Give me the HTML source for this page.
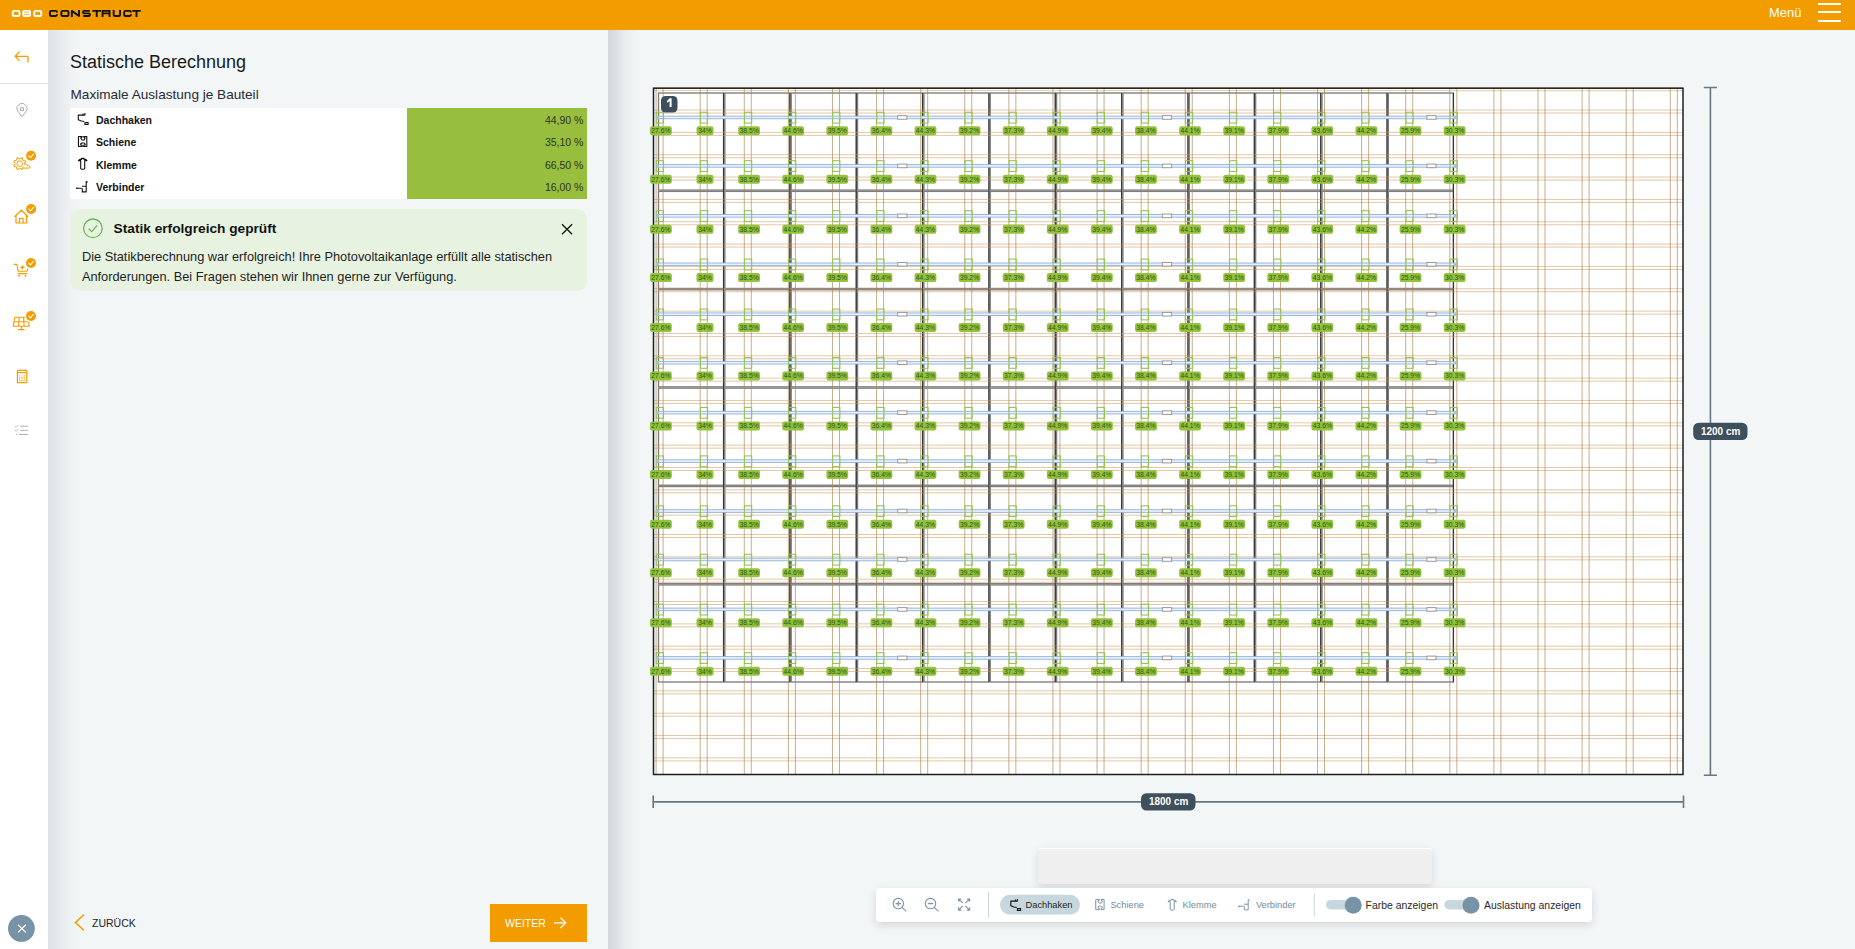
<!DOCTYPE html>
<html><head><meta charset="utf-8">
<style>
*{box-sizing:border-box;margin:0;padding:0}
html,body{width:1855px;height:949px;overflow:hidden;background:#f2f6f7;font-family:"Liberation Sans",sans-serif;color:#222}
.abs{position:absolute}
#hdr{left:0;top:0;width:1855px;height:30px;background:#f39c00}
#side{left:0;top:30px;width:48px;height:919px;background:#fff}
#panel{left:48px;top:30px;width:560px;height:919px;background:#f2f6f7}
#shadowL{left:48px;top:30px;width:32px;height:919px;background:linear-gradient(90deg,#dde1e3 0%,#e7eaec 30%,#eef1f2 65%,rgba(242,246,247,0) 100%)}
#shadowR{left:608px;top:30px;width:32px;height:919px;background:linear-gradient(90deg,#d2d7d9 0%,#dde1e3 28%,#e8ebed 50%,#eef1f2 70%,rgba(242,246,247,0) 100%)}
.t{position:absolute;white-space:nowrap;line-height:1}
#tbl{left:70px;top:108px;width:517px;height:90.6px;background:#fff}
#green{left:407px;top:108px;width:180px;height:90.6px;background:#97bf3d}
.row{position:absolute;left:0;height:22.65px;width:517px}
.row .n{position:absolute;left:26px;top:6px;font-weight:bold;font-size:10.5px;color:#111}
.row .p{position:absolute;right:3.6px;top:6px;font-size:10.5px;color:#2c3322}
.row svg{position:absolute}
#alert{left:70px;top:209.2px;width:517px;height:81.5px;background:#e7f2e1;border-radius:10px}
.lb rect{fill:#92c23e}
.lb text{font-size:6.8px;fill:#30540f;text-anchor:middle;font-family:"Liberation Sans",sans-serif}
#tb{left:876px;top:888.2px;width:716px;height:33.8px;background:#fff;border-radius:4px;box-shadow:0 3px 10px rgba(0,0,0,0.13)}
#gbar{left:1037.5px;top:848.2px;width:394.5px;height:35.5px;background:#efefef;border-radius:3px;box-shadow:0 3px 8px rgba(0,0,0,0.12);border-top:1px solid #fff}
.tbt{position:absolute;font-size:9.3px;color:#6f8c9c;top:13.1px;white-space:nowrap;line-height:1}
</style></head><body>
<div id="hdr" class="abs">
<svg class="abs" style="left:0;top:0" width="160" height="30"><path d="M12.75 12.15Q12.75 10.85 14.05 10.85L18.20 10.85Q19.50 10.85 19.50 12.15L19.50 14.65Q19.50 15.95 18.20 15.95L14.05 15.95Q12.75 15.95 12.75 14.65ZM23.25 11.85Q23.25 10.85 24.25 10.85L29.05 10.85Q30.05 10.85 30.05 11.85L30.05 14.95Q30.05 15.95 29.05 15.95L24.25 15.95Q23.25 15.95 23.25 14.95ZM23.25 13.40H30.05M34.25 12.15Q34.25 10.85 35.55 10.85L39.95 10.85Q41.25 10.85 41.25 12.15L41.25 14.65Q41.25 15.95 39.95 15.95L35.55 15.95Q34.25 15.95 34.25 14.65Z" stroke="#fff" stroke-width="1.9" fill="none" stroke-linejoin="round"/><path d="M56.95 12.50L56.95 11.68Q56.95 10.85 55.65 10.85L51.25 10.85Q49.95 10.85 49.95 12.15L49.95 14.65Q49.95 15.95 51.25 15.95L55.65 15.95Q56.95 15.95 56.95 15.12L56.95 14.30M61.35 12.15Q61.35 10.85 62.65 10.85L67.25 10.85Q68.55 10.85 68.55 12.15L68.55 14.65Q68.55 15.95 67.25 15.95L62.65 15.95Q61.35 15.95 61.35 14.65ZM71.85 16.90V10.85L79.05 15.95V9.90M89.85 10.85L84.15 10.85Q83.15 10.85 83.15 11.85L83.15 12.40Q83.15 13.40 84.15 13.40L88.85 13.40Q89.85 13.40 89.85 14.40L89.85 14.95Q89.85 15.95 88.85 15.95L83.15 15.95M92.40 10.85H101.10M96.75 10.85V16.90M102.55 16.90V10.85H109.55V13.40H102.55M109.55 13.40V16.90M113.65 9.90L113.65 14.65Q113.65 15.95 114.95 15.95L118.75 15.95Q120.05 15.95 120.05 14.65L120.05 9.90M130.85 12.50L130.85 11.68Q130.85 10.85 129.55 10.85L125.45 10.85Q124.15 10.85 124.15 12.15L124.15 14.65Q124.15 15.95 125.45 15.95L129.55 15.95Q130.85 15.95 130.85 15.12L130.85 14.30M132.30 10.85H140.70M136.50 10.85V16.90" stroke="#111" stroke-width="1.9" fill="none" stroke-linejoin="round"/></svg>
  <div class="t" style="left:1769px;top:5.7px;font-size:13px;color:#fff">Menü</div>
  <div class="abs" style="left:1818px;top:3px;width:23px;height:2px;background:#fff"></div>
  <div class="abs" style="left:1818px;top:11px;width:23px;height:2px;background:#fff"></div>
  <div class="abs" style="left:1818px;top:20px;width:23px;height:2px;background:#fff"></div>
</div>
<div id="side" class="abs">
<svg class="abs" style="left:0;top:-30px" width="48" height="949">
<path d="M19.3 51.9L15.2 56.3L19.3 60.6M15.2 56.3H27.2Q28 56.3 28 57.1V62" stroke="#f39c00" stroke-width="1.3" fill="none" stroke-linecap="round"/>
<path d="M0 83.5H48" stroke="#e3e3e3" stroke-width="1"/>
<path d="M22 116.8L18.2 111.6A4.9 4.9 0 1 1 25.8 111.6Z" stroke="#a9a9a9" stroke-width="1" fill="none" stroke-linejoin="round"/><rect x="20.5" y="107.8" width="3" height="2.6" stroke="#a9a9a9" stroke-width="0.9" fill="none"/>
<polygon points="22.23,157.50 22.95,160.35 25.80,161.07 24.30,163.60 25.80,166.13 22.95,166.85 22.23,169.70 19.70,168.20 17.17,169.70 16.45,166.85 13.60,166.13 15.10,163.60 13.60,161.07 16.45,160.35 17.17,157.50 19.70,159.00" stroke="#f39c00" stroke-width="1" fill="#fff" stroke-linejoin="round"/><circle cx="19.7" cy="163.6" r="2.8" stroke="#f39c00" stroke-width="1" fill="none"/>
<path d="M23.3 168.1H29.1Q30.1 168 29.9 166.9Q29.7 165.6 28.3 165.6H27.2Q26.9 164 25.3 163.9Q24.2 163.9 23.7 164.6" stroke="#f39c00" stroke-width="1" fill="#fff" stroke-linejoin="round"/>
<circle cx="31.1" cy="155.8" r="6.3" fill="#fff"/><circle cx="31.1" cy="155.8" r="5" fill="#f39c00"/><path d="M28.8 155.9L30.5 157.60000000000002L33.5 154.20000000000002" stroke="#fff" stroke-width="1.1" fill="none" stroke-linecap="round" stroke-linejoin="round"/>
<path d="M14.5 216.8L21.3 210.2L28.1 216.8M16 215.5V223H26.6V215.5M19.5 223V218.3H23.1V223" stroke="#f39c00" stroke-width="1.2" fill="none" stroke-linejoin="round"/>
<circle cx="31.1" cy="209" r="6.3" fill="#fff"/><circle cx="31.1" cy="209" r="5" fill="#f39c00"/><path d="M28.8 209.1L30.5 210.8L33.5 207.4" stroke="#fff" stroke-width="1.1" fill="none" stroke-linecap="round" stroke-linejoin="round"/>
<path d="M14.2 264.4H16.3Q16.9 264.4 17 265L18 271.2H26.5Q27.6 271.2 27.6 270V267.8M18.3 273.6H27" stroke="#f39c00" stroke-width="1.1" fill="none" stroke-linejoin="round" stroke-linecap="round"/><circle cx="19.1" cy="275.8" r="0.95" fill="#f39c00"/><circle cx="25.5" cy="275.8" r="0.95" fill="#f39c00"/><path d="M22.4 265.3V269.5M20.3 267.4H24.5" stroke="#f39c00" stroke-width="1.1"/>
<circle cx="31" cy="263" r="6.3" fill="#fff"/><circle cx="31" cy="263" r="5" fill="#f39c00"/><path d="M28.7 263.1L30.4 264.8L33.4 261.4" stroke="#fff" stroke-width="1.1" fill="none" stroke-linecap="round" stroke-linejoin="round"/>
<path d="M14.7 317.3H27.8L29.2 326.2H13.3Z M14 321.8H28.5 M19.2 317.3L18.6 326.2 M23.6 317.3L24.1 326.2 M21.3 326.2V329.4 M18.2 329.6H24.4" stroke="#f39c00" stroke-width="1.1" fill="none" stroke-linejoin="round"/>
<circle cx="31" cy="316" r="6.3" fill="#fff"/><circle cx="31" cy="316" r="5" fill="#f39c00"/><path d="M28.7 316.1L30.4 317.8L33.4 314.4" stroke="#fff" stroke-width="1.1" fill="none" stroke-linecap="round" stroke-linejoin="round"/>
<rect x="17.4" y="370.3" width="9.4" height="12.4" rx="0.8" stroke="#f39c00" stroke-width="1.2" fill="none"/><path d="M17.6 372.6H26.6" stroke="#f39c00" stroke-width="1.2"/><path d="M19.4 375.3V381M21.9 375.3V381M24.6 375.3V381M19.4 378H24.6M19.4 380.5H24.6" stroke="#f39c00" stroke-width="0.8" stroke-dasharray="1.1 0.9"/>
<path d="M20 426.2H28.2M20 430.3H28.2M19.2 434.5H28.2" stroke="#a9a9a9" stroke-width="0.9"/><path d="M15.2 426L16.3 427.2L18.2 425.2M15.2 430.1L16.3 431.3L18.2 429.3" stroke="#a9a9a9" stroke-width="0.8" fill="none"/><circle cx="16.5" cy="434.6" r="0.6" fill="#a9a9a9"/>
<circle cx="21.4" cy="928.4" r="13.4" fill="#7793a5"/><path d="M18 924.8L25.8 932.4M25.8 924.8L18 932.4" stroke="#fff" stroke-width="1.2"/>
</svg>
</div>
<div id="panel" class="abs"></div>
<div id="shadowL" class="abs"></div>
<div id="shadowR" class="abs"></div>
<div class="t" style="left:70px;top:52.7px;font-size:18px;color:#1a1a1a">Statische Berechnung</div>
<div class="t" style="left:70.5px;top:88px;font-size:13.6px;color:#2a2a35">Maximale Auslastung je Bauteil</div>
<div id="tbl" class="abs"></div>
<div id="green" class="abs"></div>
<div class="abs" style="left:70px;top:108px;width:517px;height:90.6px">
<div class="row" style="top:0.00px"><svg style="left:7.9px;top:5.2px;overflow:visible" width="14" height="13"><path d="M6.9 0V2.1H0.3V6.8L3.4 8L6.3 8.5M6.9 9.5H10.1V11.4H6.9ZM5 0.4V2.1" stroke="#111" stroke-width="1.1" fill="none" stroke-linejoin="round"/></svg><div class="n">Dachhaken</div><div class="p">44,90 %</div></div>
<div class="row" style="top:22.33px"><svg style="left:7.9px;top:6.0px;overflow:visible" width="14" height="13"><path d="M4.2 0.45H0.45V10.55H4.2V9.3L2.7 8.9V7.8L4 7H6.1L7.1 8.2V8.9L5.7 9.3V10.55H8.8V0.45H5.7V1.1L7.1 1.9L6.1 4H4L2.6 1.9L4.2 1.1Z" stroke="#111" stroke-width="1.1" fill="none" stroke-linejoin="round"/></svg><div class="n">Schiene</div><div class="p">35,10 %</div></div>
<div class="row" style="top:44.66px"><svg style="left:8.3px;top:5.3px;overflow:visible" width="14" height="13"><path d="M0.4 2.6L1.8 1.4H3.6V0.4H6V1.4H7.7L9 2.6H6.7V10.4L6 11.2H3.4L2.7 10.4V2.6Z" stroke="#111" stroke-width="1.1" fill="none" stroke-linejoin="round"/></svg><div class="n">Klemme</div><div class="p">66,50 %</div></div>
<div class="row" style="top:66.99px"><svg style="left:6.1px;top:6.2px;overflow:visible" width="14" height="13"><path d="M0.4 7.2H5.7M6.3 7.2V10.9H10.2V7.4M6 5.2H10.2M10.2 7.4V0.6L11.6 1.3" stroke="#111" stroke-width="1.1" fill="none" stroke-linejoin="round"/><circle cx="0.9" cy="7.2" r="0.8" fill="#111"/></svg><div class="n">Verbinder</div><div class="p">16,00 %</div></div>
</div>
<div id="alert" class="abs">
<svg class="abs" style="left:0;top:0" width="517" height="82"><circle cx="22.9" cy="19.3" r="9.3" stroke="#69b755" stroke-width="1.3" fill="none"/><path d="M18.6 19.6L21.7 22.6L27.2 16.4" stroke="#69b755" stroke-width="1.3" fill="none"/><path d="M492 15.3L502.1 25.2M502.1 15.3L492 25.2" stroke="#111" stroke-width="1.3"/></svg><div class="t" style="left:43.6px;top:12.8px;font-size:13.7px;font-weight:bold;color:#111">Statik erfolgreich geprüft</div><div class="t" style="left:11.9px;top:41.85px;font-size:12.8px;color:#1e1e1e">Die Statikberechnung war erfolgreich! Ihre Photovoltaikanlage erfüllt alle statischen</div><div class="t" style="left:11.9px;top:61.85px;font-size:12.8px;color:#1e1e1e">Anforderungen. Bei Fragen stehen wir Ihnen gerne zur Verfügung.</div>
</div>
<div class="abs" style="left:73.5px;top:914px">
<svg width="12" height="18"><path d="M9.5 1L1.5 8.5L9.5 16" stroke="#f39c00" stroke-width="1.6" fill="none" stroke-linecap="round"/></svg>
</div>
<div class="t" style="left:92px;top:918px;font-size:10.5px;color:#222">ZURÜCK</div>
<div class="abs" style="left:490px;top:904px;width:97px;height:38px;background:#f39c00"></div>
<div class="t" style="left:505px;top:917.9px;font-size:10.5px;color:#fff">WEITER</div>
<svg class="abs" style="left:553px;top:917px" width="15" height="13"><path d="M1 5.8H13M7.5 0.7L12.8 5.8L7.5 11" stroke="#fff" stroke-width="1.2" fill="none"/></svg>

<svg class="abs" style="left:0;top:0" width="1855" height="949">
<rect x="653.5" y="88.2" width="1029.5" height="686.3" fill="#fff"/>
<g fill="none" stroke="#7d7d7d" stroke-width="1.35"><rect x="658.5" y="93.01" width="65.05" height="97.08"/><rect x="724.85" y="93.01" width="65.05" height="97.08"/><rect x="791.2" y="93.01" width="65.05" height="97.08"/><rect x="857.55" y="93.01" width="65.05" height="97.08"/><rect x="923.9" y="93.01" width="65.05" height="97.08"/><rect x="990.25" y="93.01" width="65.05" height="97.08"/><rect x="1056.6" y="93.01" width="65.05" height="97.08"/><rect x="1122.95" y="93.01" width="65.05" height="97.08"/><rect x="1189.3" y="93.01" width="65.05" height="97.08"/><rect x="1255.65" y="93.01" width="65.05" height="97.08"/><rect x="1322" y="93.01" width="65.05" height="97.08"/><rect x="1388.35" y="93.01" width="65.05" height="97.08"/><rect x="658.5" y="191.39" width="65.05" height="97.08"/><rect x="724.85" y="191.39" width="65.05" height="97.08"/><rect x="791.2" y="191.39" width="65.05" height="97.08"/><rect x="857.55" y="191.39" width="65.05" height="97.08"/><rect x="923.9" y="191.39" width="65.05" height="97.08"/><rect x="990.25" y="191.39" width="65.05" height="97.08"/><rect x="1056.6" y="191.39" width="65.05" height="97.08"/><rect x="1122.95" y="191.39" width="65.05" height="97.08"/><rect x="1189.3" y="191.39" width="65.05" height="97.08"/><rect x="1255.65" y="191.39" width="65.05" height="97.08"/><rect x="1322" y="191.39" width="65.05" height="97.08"/><rect x="1388.35" y="191.39" width="65.05" height="97.08"/><rect x="658.5" y="289.77" width="65.05" height="97.08"/><rect x="724.85" y="289.77" width="65.05" height="97.08"/><rect x="791.2" y="289.77" width="65.05" height="97.08"/><rect x="857.55" y="289.77" width="65.05" height="97.08"/><rect x="923.9" y="289.77" width="65.05" height="97.08"/><rect x="990.25" y="289.77" width="65.05" height="97.08"/><rect x="1056.6" y="289.77" width="65.05" height="97.08"/><rect x="1122.95" y="289.77" width="65.05" height="97.08"/><rect x="1189.3" y="289.77" width="65.05" height="97.08"/><rect x="1255.65" y="289.77" width="65.05" height="97.08"/><rect x="1322" y="289.77" width="65.05" height="97.08"/><rect x="1388.35" y="289.77" width="65.05" height="97.08"/><rect x="658.5" y="388.15" width="65.05" height="97.08"/><rect x="724.85" y="388.15" width="65.05" height="97.08"/><rect x="791.2" y="388.15" width="65.05" height="97.08"/><rect x="857.55" y="388.15" width="65.05" height="97.08"/><rect x="923.9" y="388.15" width="65.05" height="97.08"/><rect x="990.25" y="388.15" width="65.05" height="97.08"/><rect x="1056.6" y="388.15" width="65.05" height="97.08"/><rect x="1122.95" y="388.15" width="65.05" height="97.08"/><rect x="1189.3" y="388.15" width="65.05" height="97.08"/><rect x="1255.65" y="388.15" width="65.05" height="97.08"/><rect x="1322" y="388.15" width="65.05" height="97.08"/><rect x="1388.35" y="388.15" width="65.05" height="97.08"/><rect x="658.5" y="486.53" width="65.05" height="97.08"/><rect x="724.85" y="486.53" width="65.05" height="97.08"/><rect x="791.2" y="486.53" width="65.05" height="97.08"/><rect x="857.55" y="486.53" width="65.05" height="97.08"/><rect x="923.9" y="486.53" width="65.05" height="97.08"/><rect x="990.25" y="486.53" width="65.05" height="97.08"/><rect x="1056.6" y="486.53" width="65.05" height="97.08"/><rect x="1122.95" y="486.53" width="65.05" height="97.08"/><rect x="1189.3" y="486.53" width="65.05" height="97.08"/><rect x="1255.65" y="486.53" width="65.05" height="97.08"/><rect x="1322" y="486.53" width="65.05" height="97.08"/><rect x="1388.35" y="486.53" width="65.05" height="97.08"/><rect x="658.5" y="584.91" width="65.05" height="97.08"/><rect x="724.85" y="584.91" width="65.05" height="97.08"/><rect x="791.2" y="584.91" width="65.05" height="97.08"/><rect x="857.55" y="584.91" width="65.05" height="97.08"/><rect x="923.9" y="584.91" width="65.05" height="97.08"/><rect x="990.25" y="584.91" width="65.05" height="97.08"/><rect x="1056.6" y="584.91" width="65.05" height="97.08"/><rect x="1122.95" y="584.91" width="65.05" height="97.08"/><rect x="1189.3" y="584.91" width="65.05" height="97.08"/><rect x="1255.65" y="584.91" width="65.05" height="97.08"/><rect x="1322" y="584.91" width="65.05" height="97.08"/><rect x="1388.35" y="584.91" width="65.05" height="97.08"/></g>
<path d="M723.55 93.01V681.99M789.9 93.01V681.99M856.25 93.01V681.99M922.6 93.01V681.99M988.95 93.01V681.99M1055.3 93.01V681.99M1121.65 93.01V681.99M1188 93.01V681.99M1254.35 93.01V681.99M1320.7 93.01V681.99M1387.05 93.01V681.99M1453.4 93.01V681.99" stroke="#333" stroke-width="1.1"/>
<path d="M653.5 87.7H1683.0M653.5 90.7H1683.0M653.5 110.04H1683.0M653.5 113.04H1683.0M653.5 132.38H1683.0M653.5 135.38H1683.0M653.5 154.72H1683.0M653.5 157.72H1683.0M653.5 177.06H1683.0M653.5 180.06H1683.0M653.5 199.4H1683.0M653.5 202.4H1683.0M653.5 221.74H1683.0M653.5 224.74H1683.0M653.5 244.08H1683.0M653.5 247.08H1683.0M653.5 266.42H1683.0M653.5 269.42H1683.0M653.5 288.76H1683.0M653.5 291.76H1683.0M653.5 311.1H1683.0M653.5 314.1H1683.0M653.5 333.44H1683.0M653.5 336.44H1683.0M653.5 355.78H1683.0M653.5 358.78H1683.0M653.5 378.12H1683.0M653.5 381.12H1683.0M653.5 400.46H1683.0M653.5 403.46H1683.0M653.5 422.8H1683.0M653.5 425.8H1683.0M653.5 445.14H1683.0M653.5 448.14H1683.0M653.5 467.48H1683.0M653.5 470.48H1683.0M653.5 489.82H1683.0M653.5 492.82H1683.0M653.5 512.16H1683.0M653.5 515.16H1683.0M653.5 534.5H1683.0M653.5 537.5H1683.0M653.5 556.84H1683.0M653.5 559.84H1683.0M653.5 579.18H1683.0M653.5 582.18H1683.0M653.5 601.52H1683.0M653.5 604.52H1683.0M653.5 623.86H1683.0M653.5 626.86H1683.0M653.5 646.2H1683.0M653.5 649.2H1683.0M653.5 668.54H1683.0M653.5 671.54H1683.0M653.5 690.88H1683.0M653.5 693.88H1683.0M653.5 713.22H1683.0M653.5 716.22H1683.0M653.5 735.56H1683.0M653.5 738.56H1683.0M653.5 757.9H1683.0M653.5 760.9H1683.0" stroke="#c99a5e" stroke-opacity="0.55" stroke-width="1" fill="none"/>
<path d="M656.1 88.2V774.5M663.1 88.2V774.5M700.2 88.2V774.5M707.2 88.2V774.5M744.29 88.2V774.5M751.29 88.2V774.5M788.39 88.2V774.5M795.39 88.2V774.5M832.48 88.2V774.5M839.48 88.2V774.5M876.58 88.2V774.5M883.58 88.2V774.5M920.68 88.2V774.5M927.68 88.2V774.5M964.77 88.2V774.5M971.77 88.2V774.5M1008.87 88.2V774.5M1015.87 88.2V774.5M1052.96 88.2V774.5M1059.96 88.2V774.5M1097.06 88.2V774.5M1104.06 88.2V774.5M1141.16 88.2V774.5M1148.16 88.2V774.5M1185.25 88.2V774.5M1192.25 88.2V774.5M1229.35 88.2V774.5M1236.35 88.2V774.5M1273.44 88.2V774.5M1280.44 88.2V774.5M1317.54 88.2V774.5M1324.54 88.2V774.5M1361.64 88.2V774.5M1368.64 88.2V774.5M1405.73 88.2V774.5M1412.73 88.2V774.5M1449.83 88.2V774.5M1456.83 88.2V774.5M1493.92 88.2V774.5M1500.92 88.2V774.5M1538.02 88.2V774.5M1545.02 88.2V774.5M1582.12 88.2V774.5M1589.12 88.2V774.5M1626.21 88.2V774.5M1633.21 88.2V774.5M1670.31 88.2V774.5M1677.31 88.2V774.5" stroke="#a88450" stroke-opacity="0.66" stroke-width="1" fill="none"/>
<rect x="653.5" y="88.2" width="1029.5" height="686.3" fill="none" stroke="#1e1e1e" stroke-width="1.5"/>
<g fill="#edf2fa" stroke="#8fb0de" stroke-width="0.9"><rect x="657" y="116.15" width="800" height="2.6"/><rect x="657" y="164.6" width="800" height="2.6"/><rect x="657" y="214.54" width="800" height="2.6"/><rect x="657" y="263" width="800" height="2.6"/><rect x="657" y="312.93" width="800" height="2.6"/><rect x="657" y="361.4" width="800" height="2.6"/><rect x="657" y="411.32" width="800" height="2.6"/><rect x="657" y="459.8" width="800" height="2.6"/><rect x="657" y="509.71" width="800" height="2.6"/><rect x="657" y="558.2" width="800" height="2.6"/><rect x="657" y="608.1" width="800" height="2.6"/><rect x="657" y="656.6" width="800" height="2.6"/></g>
<g fill="none" stroke="#93c64e" stroke-width="1.1"><rect x="656.3" y="112.25" width="7.2" height="10.8"/><rect x="700.4" y="112.25" width="7.2" height="10.8"/><rect x="744.49" y="112.25" width="7.2" height="10.8"/><rect x="788.59" y="112.25" width="7.2" height="10.8"/><rect x="832.68" y="112.25" width="7.2" height="10.8"/><rect x="876.78" y="112.25" width="7.2" height="10.8"/><rect x="920.88" y="112.25" width="7.2" height="10.8"/><rect x="964.97" y="112.25" width="7.2" height="10.8"/><rect x="1009.07" y="112.25" width="7.2" height="10.8"/><rect x="1053.16" y="112.25" width="7.2" height="10.8"/><rect x="1097.26" y="112.25" width="7.2" height="10.8"/><rect x="1141.36" y="112.25" width="7.2" height="10.8"/><rect x="1185.45" y="112.25" width="7.2" height="10.8"/><rect x="1229.55" y="112.25" width="7.2" height="10.8"/><rect x="1273.64" y="112.25" width="7.2" height="10.8"/><rect x="1317.74" y="112.25" width="7.2" height="10.8"/><rect x="1361.84" y="112.25" width="7.2" height="10.8"/><rect x="1405.93" y="112.25" width="7.2" height="10.8"/><rect x="1450.03" y="112.25" width="7.2" height="10.8"/><rect x="656.3" y="160.7" width="7.2" height="10.8"/><rect x="700.4" y="160.7" width="7.2" height="10.8"/><rect x="744.49" y="160.7" width="7.2" height="10.8"/><rect x="788.59" y="160.7" width="7.2" height="10.8"/><rect x="832.68" y="160.7" width="7.2" height="10.8"/><rect x="876.78" y="160.7" width="7.2" height="10.8"/><rect x="920.88" y="160.7" width="7.2" height="10.8"/><rect x="964.97" y="160.7" width="7.2" height="10.8"/><rect x="1009.07" y="160.7" width="7.2" height="10.8"/><rect x="1053.16" y="160.7" width="7.2" height="10.8"/><rect x="1097.26" y="160.7" width="7.2" height="10.8"/><rect x="1141.36" y="160.7" width="7.2" height="10.8"/><rect x="1185.45" y="160.7" width="7.2" height="10.8"/><rect x="1229.55" y="160.7" width="7.2" height="10.8"/><rect x="1273.64" y="160.7" width="7.2" height="10.8"/><rect x="1317.74" y="160.7" width="7.2" height="10.8"/><rect x="1361.84" y="160.7" width="7.2" height="10.8"/><rect x="1405.93" y="160.7" width="7.2" height="10.8"/><rect x="1450.03" y="160.7" width="7.2" height="10.8"/><rect x="656.3" y="210.64" width="7.2" height="10.8"/><rect x="700.4" y="210.64" width="7.2" height="10.8"/><rect x="744.49" y="210.64" width="7.2" height="10.8"/><rect x="788.59" y="210.64" width="7.2" height="10.8"/><rect x="832.68" y="210.64" width="7.2" height="10.8"/><rect x="876.78" y="210.64" width="7.2" height="10.8"/><rect x="920.88" y="210.64" width="7.2" height="10.8"/><rect x="964.97" y="210.64" width="7.2" height="10.8"/><rect x="1009.07" y="210.64" width="7.2" height="10.8"/><rect x="1053.16" y="210.64" width="7.2" height="10.8"/><rect x="1097.26" y="210.64" width="7.2" height="10.8"/><rect x="1141.36" y="210.64" width="7.2" height="10.8"/><rect x="1185.45" y="210.64" width="7.2" height="10.8"/><rect x="1229.55" y="210.64" width="7.2" height="10.8"/><rect x="1273.64" y="210.64" width="7.2" height="10.8"/><rect x="1317.74" y="210.64" width="7.2" height="10.8"/><rect x="1361.84" y="210.64" width="7.2" height="10.8"/><rect x="1405.93" y="210.64" width="7.2" height="10.8"/><rect x="1450.03" y="210.64" width="7.2" height="10.8"/><rect x="656.3" y="259.1" width="7.2" height="10.8"/><rect x="700.4" y="259.1" width="7.2" height="10.8"/><rect x="744.49" y="259.1" width="7.2" height="10.8"/><rect x="788.59" y="259.1" width="7.2" height="10.8"/><rect x="832.68" y="259.1" width="7.2" height="10.8"/><rect x="876.78" y="259.1" width="7.2" height="10.8"/><rect x="920.88" y="259.1" width="7.2" height="10.8"/><rect x="964.97" y="259.1" width="7.2" height="10.8"/><rect x="1009.07" y="259.1" width="7.2" height="10.8"/><rect x="1053.16" y="259.1" width="7.2" height="10.8"/><rect x="1097.26" y="259.1" width="7.2" height="10.8"/><rect x="1141.36" y="259.1" width="7.2" height="10.8"/><rect x="1185.45" y="259.1" width="7.2" height="10.8"/><rect x="1229.55" y="259.1" width="7.2" height="10.8"/><rect x="1273.64" y="259.1" width="7.2" height="10.8"/><rect x="1317.74" y="259.1" width="7.2" height="10.8"/><rect x="1361.84" y="259.1" width="7.2" height="10.8"/><rect x="1405.93" y="259.1" width="7.2" height="10.8"/><rect x="1450.03" y="259.1" width="7.2" height="10.8"/><rect x="656.3" y="309.03" width="7.2" height="10.8"/><rect x="700.4" y="309.03" width="7.2" height="10.8"/><rect x="744.49" y="309.03" width="7.2" height="10.8"/><rect x="788.59" y="309.03" width="7.2" height="10.8"/><rect x="832.68" y="309.03" width="7.2" height="10.8"/><rect x="876.78" y="309.03" width="7.2" height="10.8"/><rect x="920.88" y="309.03" width="7.2" height="10.8"/><rect x="964.97" y="309.03" width="7.2" height="10.8"/><rect x="1009.07" y="309.03" width="7.2" height="10.8"/><rect x="1053.16" y="309.03" width="7.2" height="10.8"/><rect x="1097.26" y="309.03" width="7.2" height="10.8"/><rect x="1141.36" y="309.03" width="7.2" height="10.8"/><rect x="1185.45" y="309.03" width="7.2" height="10.8"/><rect x="1229.55" y="309.03" width="7.2" height="10.8"/><rect x="1273.64" y="309.03" width="7.2" height="10.8"/><rect x="1317.74" y="309.03" width="7.2" height="10.8"/><rect x="1361.84" y="309.03" width="7.2" height="10.8"/><rect x="1405.93" y="309.03" width="7.2" height="10.8"/><rect x="1450.03" y="309.03" width="7.2" height="10.8"/><rect x="656.3" y="357.5" width="7.2" height="10.8"/><rect x="700.4" y="357.5" width="7.2" height="10.8"/><rect x="744.49" y="357.5" width="7.2" height="10.8"/><rect x="788.59" y="357.5" width="7.2" height="10.8"/><rect x="832.68" y="357.5" width="7.2" height="10.8"/><rect x="876.78" y="357.5" width="7.2" height="10.8"/><rect x="920.88" y="357.5" width="7.2" height="10.8"/><rect x="964.97" y="357.5" width="7.2" height="10.8"/><rect x="1009.07" y="357.5" width="7.2" height="10.8"/><rect x="1053.16" y="357.5" width="7.2" height="10.8"/><rect x="1097.26" y="357.5" width="7.2" height="10.8"/><rect x="1141.36" y="357.5" width="7.2" height="10.8"/><rect x="1185.45" y="357.5" width="7.2" height="10.8"/><rect x="1229.55" y="357.5" width="7.2" height="10.8"/><rect x="1273.64" y="357.5" width="7.2" height="10.8"/><rect x="1317.74" y="357.5" width="7.2" height="10.8"/><rect x="1361.84" y="357.5" width="7.2" height="10.8"/><rect x="1405.93" y="357.5" width="7.2" height="10.8"/><rect x="1450.03" y="357.5" width="7.2" height="10.8"/><rect x="656.3" y="407.42" width="7.2" height="10.8"/><rect x="700.4" y="407.42" width="7.2" height="10.8"/><rect x="744.49" y="407.42" width="7.2" height="10.8"/><rect x="788.59" y="407.42" width="7.2" height="10.8"/><rect x="832.68" y="407.42" width="7.2" height="10.8"/><rect x="876.78" y="407.42" width="7.2" height="10.8"/><rect x="920.88" y="407.42" width="7.2" height="10.8"/><rect x="964.97" y="407.42" width="7.2" height="10.8"/><rect x="1009.07" y="407.42" width="7.2" height="10.8"/><rect x="1053.16" y="407.42" width="7.2" height="10.8"/><rect x="1097.26" y="407.42" width="7.2" height="10.8"/><rect x="1141.36" y="407.42" width="7.2" height="10.8"/><rect x="1185.45" y="407.42" width="7.2" height="10.8"/><rect x="1229.55" y="407.42" width="7.2" height="10.8"/><rect x="1273.64" y="407.42" width="7.2" height="10.8"/><rect x="1317.74" y="407.42" width="7.2" height="10.8"/><rect x="1361.84" y="407.42" width="7.2" height="10.8"/><rect x="1405.93" y="407.42" width="7.2" height="10.8"/><rect x="1450.03" y="407.42" width="7.2" height="10.8"/><rect x="656.3" y="455.9" width="7.2" height="10.8"/><rect x="700.4" y="455.9" width="7.2" height="10.8"/><rect x="744.49" y="455.9" width="7.2" height="10.8"/><rect x="788.59" y="455.9" width="7.2" height="10.8"/><rect x="832.68" y="455.9" width="7.2" height="10.8"/><rect x="876.78" y="455.9" width="7.2" height="10.8"/><rect x="920.88" y="455.9" width="7.2" height="10.8"/><rect x="964.97" y="455.9" width="7.2" height="10.8"/><rect x="1009.07" y="455.9" width="7.2" height="10.8"/><rect x="1053.16" y="455.9" width="7.2" height="10.8"/><rect x="1097.26" y="455.9" width="7.2" height="10.8"/><rect x="1141.36" y="455.9" width="7.2" height="10.8"/><rect x="1185.45" y="455.9" width="7.2" height="10.8"/><rect x="1229.55" y="455.9" width="7.2" height="10.8"/><rect x="1273.64" y="455.9" width="7.2" height="10.8"/><rect x="1317.74" y="455.9" width="7.2" height="10.8"/><rect x="1361.84" y="455.9" width="7.2" height="10.8"/><rect x="1405.93" y="455.9" width="7.2" height="10.8"/><rect x="1450.03" y="455.9" width="7.2" height="10.8"/><rect x="656.3" y="505.81" width="7.2" height="10.8"/><rect x="700.4" y="505.81" width="7.2" height="10.8"/><rect x="744.49" y="505.81" width="7.2" height="10.8"/><rect x="788.59" y="505.81" width="7.2" height="10.8"/><rect x="832.68" y="505.81" width="7.2" height="10.8"/><rect x="876.78" y="505.81" width="7.2" height="10.8"/><rect x="920.88" y="505.81" width="7.2" height="10.8"/><rect x="964.97" y="505.81" width="7.2" height="10.8"/><rect x="1009.07" y="505.81" width="7.2" height="10.8"/><rect x="1053.16" y="505.81" width="7.2" height="10.8"/><rect x="1097.26" y="505.81" width="7.2" height="10.8"/><rect x="1141.36" y="505.81" width="7.2" height="10.8"/><rect x="1185.45" y="505.81" width="7.2" height="10.8"/><rect x="1229.55" y="505.81" width="7.2" height="10.8"/><rect x="1273.64" y="505.81" width="7.2" height="10.8"/><rect x="1317.74" y="505.81" width="7.2" height="10.8"/><rect x="1361.84" y="505.81" width="7.2" height="10.8"/><rect x="1405.93" y="505.81" width="7.2" height="10.8"/><rect x="1450.03" y="505.81" width="7.2" height="10.8"/><rect x="656.3" y="554.3" width="7.2" height="10.8"/><rect x="700.4" y="554.3" width="7.2" height="10.8"/><rect x="744.49" y="554.3" width="7.2" height="10.8"/><rect x="788.59" y="554.3" width="7.2" height="10.8"/><rect x="832.68" y="554.3" width="7.2" height="10.8"/><rect x="876.78" y="554.3" width="7.2" height="10.8"/><rect x="920.88" y="554.3" width="7.2" height="10.8"/><rect x="964.97" y="554.3" width="7.2" height="10.8"/><rect x="1009.07" y="554.3" width="7.2" height="10.8"/><rect x="1053.16" y="554.3" width="7.2" height="10.8"/><rect x="1097.26" y="554.3" width="7.2" height="10.8"/><rect x="1141.36" y="554.3" width="7.2" height="10.8"/><rect x="1185.45" y="554.3" width="7.2" height="10.8"/><rect x="1229.55" y="554.3" width="7.2" height="10.8"/><rect x="1273.64" y="554.3" width="7.2" height="10.8"/><rect x="1317.74" y="554.3" width="7.2" height="10.8"/><rect x="1361.84" y="554.3" width="7.2" height="10.8"/><rect x="1405.93" y="554.3" width="7.2" height="10.8"/><rect x="1450.03" y="554.3" width="7.2" height="10.8"/><rect x="656.3" y="604.2" width="7.2" height="10.8"/><rect x="700.4" y="604.2" width="7.2" height="10.8"/><rect x="744.49" y="604.2" width="7.2" height="10.8"/><rect x="788.59" y="604.2" width="7.2" height="10.8"/><rect x="832.68" y="604.2" width="7.2" height="10.8"/><rect x="876.78" y="604.2" width="7.2" height="10.8"/><rect x="920.88" y="604.2" width="7.2" height="10.8"/><rect x="964.97" y="604.2" width="7.2" height="10.8"/><rect x="1009.07" y="604.2" width="7.2" height="10.8"/><rect x="1053.16" y="604.2" width="7.2" height="10.8"/><rect x="1097.26" y="604.2" width="7.2" height="10.8"/><rect x="1141.36" y="604.2" width="7.2" height="10.8"/><rect x="1185.45" y="604.2" width="7.2" height="10.8"/><rect x="1229.55" y="604.2" width="7.2" height="10.8"/><rect x="1273.64" y="604.2" width="7.2" height="10.8"/><rect x="1317.74" y="604.2" width="7.2" height="10.8"/><rect x="1361.84" y="604.2" width="7.2" height="10.8"/><rect x="1405.93" y="604.2" width="7.2" height="10.8"/><rect x="1450.03" y="604.2" width="7.2" height="10.8"/><rect x="656.3" y="652.7" width="7.2" height="10.8"/><rect x="700.4" y="652.7" width="7.2" height="10.8"/><rect x="744.49" y="652.7" width="7.2" height="10.8"/><rect x="788.59" y="652.7" width="7.2" height="10.8"/><rect x="832.68" y="652.7" width="7.2" height="10.8"/><rect x="876.78" y="652.7" width="7.2" height="10.8"/><rect x="920.88" y="652.7" width="7.2" height="10.8"/><rect x="964.97" y="652.7" width="7.2" height="10.8"/><rect x="1009.07" y="652.7" width="7.2" height="10.8"/><rect x="1053.16" y="652.7" width="7.2" height="10.8"/><rect x="1097.26" y="652.7" width="7.2" height="10.8"/><rect x="1141.36" y="652.7" width="7.2" height="10.8"/><rect x="1185.45" y="652.7" width="7.2" height="10.8"/><rect x="1229.55" y="652.7" width="7.2" height="10.8"/><rect x="1273.64" y="652.7" width="7.2" height="10.8"/><rect x="1317.74" y="652.7" width="7.2" height="10.8"/><rect x="1361.84" y="652.7" width="7.2" height="10.8"/><rect x="1405.93" y="652.7" width="7.2" height="10.8"/><rect x="1450.03" y="652.7" width="7.2" height="10.8"/></g>
<g fill="#fff" stroke="#9a9a9a" stroke-width="1"><rect x="655.9" y="116.25" width="3.2" height="2.4" fill="#bbb" stroke="none"/><rect x="1453.6" y="116.25" width="3.2" height="2.4" fill="#bbb" stroke="none"/><rect x="897.7" y="115.65" width="9.2" height="3.6"/><rect x="1162.4" y="115.65" width="9.2" height="3.6"/><rect x="1426.9" y="115.65" width="9.2" height="3.6"/><rect x="655.9" y="164.7" width="3.2" height="2.4" fill="#bbb" stroke="none"/><rect x="1453.6" y="164.7" width="3.2" height="2.4" fill="#bbb" stroke="none"/><rect x="897.7" y="164.1" width="9.2" height="3.6"/><rect x="1162.4" y="164.1" width="9.2" height="3.6"/><rect x="1426.9" y="164.1" width="9.2" height="3.6"/><rect x="655.9" y="214.64" width="3.2" height="2.4" fill="#bbb" stroke="none"/><rect x="1453.6" y="214.64" width="3.2" height="2.4" fill="#bbb" stroke="none"/><rect x="897.7" y="214.04" width="9.2" height="3.6"/><rect x="1162.4" y="214.04" width="9.2" height="3.6"/><rect x="1426.9" y="214.04" width="9.2" height="3.6"/><rect x="655.9" y="263.1" width="3.2" height="2.4" fill="#bbb" stroke="none"/><rect x="1453.6" y="263.1" width="3.2" height="2.4" fill="#bbb" stroke="none"/><rect x="897.7" y="262.5" width="9.2" height="3.6"/><rect x="1162.4" y="262.5" width="9.2" height="3.6"/><rect x="1426.9" y="262.5" width="9.2" height="3.6"/><rect x="655.9" y="313.03" width="3.2" height="2.4" fill="#bbb" stroke="none"/><rect x="1453.6" y="313.03" width="3.2" height="2.4" fill="#bbb" stroke="none"/><rect x="897.7" y="312.43" width="9.2" height="3.6"/><rect x="1162.4" y="312.43" width="9.2" height="3.6"/><rect x="1426.9" y="312.43" width="9.2" height="3.6"/><rect x="655.9" y="361.5" width="3.2" height="2.4" fill="#bbb" stroke="none"/><rect x="1453.6" y="361.5" width="3.2" height="2.4" fill="#bbb" stroke="none"/><rect x="897.7" y="360.9" width="9.2" height="3.6"/><rect x="1162.4" y="360.9" width="9.2" height="3.6"/><rect x="1426.9" y="360.9" width="9.2" height="3.6"/><rect x="655.9" y="411.42" width="3.2" height="2.4" fill="#bbb" stroke="none"/><rect x="1453.6" y="411.42" width="3.2" height="2.4" fill="#bbb" stroke="none"/><rect x="897.7" y="410.82" width="9.2" height="3.6"/><rect x="1162.4" y="410.82" width="9.2" height="3.6"/><rect x="1426.9" y="410.82" width="9.2" height="3.6"/><rect x="655.9" y="459.9" width="3.2" height="2.4" fill="#bbb" stroke="none"/><rect x="1453.6" y="459.9" width="3.2" height="2.4" fill="#bbb" stroke="none"/><rect x="897.7" y="459.3" width="9.2" height="3.6"/><rect x="1162.4" y="459.3" width="9.2" height="3.6"/><rect x="1426.9" y="459.3" width="9.2" height="3.6"/><rect x="655.9" y="509.81" width="3.2" height="2.4" fill="#bbb" stroke="none"/><rect x="1453.6" y="509.81" width="3.2" height="2.4" fill="#bbb" stroke="none"/><rect x="897.7" y="509.21" width="9.2" height="3.6"/><rect x="1162.4" y="509.21" width="9.2" height="3.6"/><rect x="1426.9" y="509.21" width="9.2" height="3.6"/><rect x="655.9" y="558.3" width="3.2" height="2.4" fill="#bbb" stroke="none"/><rect x="1453.6" y="558.3" width="3.2" height="2.4" fill="#bbb" stroke="none"/><rect x="897.7" y="557.7" width="9.2" height="3.6"/><rect x="1162.4" y="557.7" width="9.2" height="3.6"/><rect x="1426.9" y="557.7" width="9.2" height="3.6"/><rect x="655.9" y="608.2" width="3.2" height="2.4" fill="#bbb" stroke="none"/><rect x="1453.6" y="608.2" width="3.2" height="2.4" fill="#bbb" stroke="none"/><rect x="897.7" y="607.6" width="9.2" height="3.6"/><rect x="1162.4" y="607.6" width="9.2" height="3.6"/><rect x="1426.9" y="607.6" width="9.2" height="3.6"/><rect x="655.9" y="656.7" width="3.2" height="2.4" fill="#bbb" stroke="none"/><rect x="1453.6" y="656.7" width="3.2" height="2.4" fill="#bbb" stroke="none"/><rect x="897.7" y="656.1" width="9.2" height="3.6"/><rect x="1162.4" y="656.1" width="9.2" height="3.6"/><rect x="1426.9" y="656.1" width="9.2" height="3.6"/></g>
<g class="lb"><rect x="650" y="126.25" width="21.8" height="9" rx="2.2"/><text x="660.9" y="133.2">27.6%</text><rect x="696.5" y="126.25" width="17" height="9" rx="2.2"/><text x="705" y="133.2">34%</text><rect x="738.19" y="126.25" width="21.8" height="9" rx="2.2"/><text x="749.09" y="133.2">38.5%</text><rect x="782.29" y="126.25" width="21.8" height="9" rx="2.2"/><text x="793.19" y="133.2">44.6%</text><rect x="826.38" y="126.25" width="21.8" height="9" rx="2.2"/><text x="837.28" y="133.2">39.5%</text><rect x="870.48" y="126.25" width="21.8" height="9" rx="2.2"/><text x="881.38" y="133.2">36.4%</text><rect x="914.58" y="126.25" width="21.8" height="9" rx="2.2"/><text x="925.48" y="133.2">44.3%</text><rect x="958.67" y="126.25" width="21.8" height="9" rx="2.2"/><text x="969.57" y="133.2">39.2%</text><rect x="1002.77" y="126.25" width="21.8" height="9" rx="2.2"/><text x="1013.67" y="133.2">37.3%</text><rect x="1046.86" y="126.25" width="21.8" height="9" rx="2.2"/><text x="1057.76" y="133.2">44.9%</text><rect x="1090.96" y="126.25" width="21.8" height="9" rx="2.2"/><text x="1101.86" y="133.2">39.4%</text><rect x="1135.06" y="126.25" width="21.8" height="9" rx="2.2"/><text x="1145.96" y="133.2">38.4%</text><rect x="1179.15" y="126.25" width="21.8" height="9" rx="2.2"/><text x="1190.05" y="133.2">44.1%</text><rect x="1223.25" y="126.25" width="21.8" height="9" rx="2.2"/><text x="1234.15" y="133.2">39.1%</text><rect x="1267.34" y="126.25" width="21.8" height="9" rx="2.2"/><text x="1278.24" y="133.2">37.9%</text><rect x="1311.44" y="126.25" width="21.8" height="9" rx="2.2"/><text x="1322.34" y="133.2">43.6%</text><rect x="1355.54" y="126.25" width="21.8" height="9" rx="2.2"/><text x="1366.44" y="133.2">44.2%</text><rect x="1399.63" y="126.25" width="21.8" height="9" rx="2.2"/><text x="1410.53" y="133.2">25.9%</text><rect x="1443.73" y="126.25" width="21.8" height="9" rx="2.2"/><text x="1454.63" y="133.2">30.3%</text><rect x="650" y="174.7" width="21.8" height="9" rx="2.2"/><text x="660.9" y="181.65">27.6%</text><rect x="696.5" y="174.7" width="17" height="9" rx="2.2"/><text x="705" y="181.65">34%</text><rect x="738.19" y="174.7" width="21.8" height="9" rx="2.2"/><text x="749.09" y="181.65">38.5%</text><rect x="782.29" y="174.7" width="21.8" height="9" rx="2.2"/><text x="793.19" y="181.65">44.6%</text><rect x="826.38" y="174.7" width="21.8" height="9" rx="2.2"/><text x="837.28" y="181.65">39.5%</text><rect x="870.48" y="174.7" width="21.8" height="9" rx="2.2"/><text x="881.38" y="181.65">36.4%</text><rect x="914.58" y="174.7" width="21.8" height="9" rx="2.2"/><text x="925.48" y="181.65">44.3%</text><rect x="958.67" y="174.7" width="21.8" height="9" rx="2.2"/><text x="969.57" y="181.65">39.2%</text><rect x="1002.77" y="174.7" width="21.8" height="9" rx="2.2"/><text x="1013.67" y="181.65">37.3%</text><rect x="1046.86" y="174.7" width="21.8" height="9" rx="2.2"/><text x="1057.76" y="181.65">44.9%</text><rect x="1090.96" y="174.7" width="21.8" height="9" rx="2.2"/><text x="1101.86" y="181.65">39.4%</text><rect x="1135.06" y="174.7" width="21.8" height="9" rx="2.2"/><text x="1145.96" y="181.65">38.4%</text><rect x="1179.15" y="174.7" width="21.8" height="9" rx="2.2"/><text x="1190.05" y="181.65">44.1%</text><rect x="1223.25" y="174.7" width="21.8" height="9" rx="2.2"/><text x="1234.15" y="181.65">39.1%</text><rect x="1267.34" y="174.7" width="21.8" height="9" rx="2.2"/><text x="1278.24" y="181.65">37.9%</text><rect x="1311.44" y="174.7" width="21.8" height="9" rx="2.2"/><text x="1322.34" y="181.65">43.6%</text><rect x="1355.54" y="174.7" width="21.8" height="9" rx="2.2"/><text x="1366.44" y="181.65">44.2%</text><rect x="1399.63" y="174.7" width="21.8" height="9" rx="2.2"/><text x="1410.53" y="181.65">25.9%</text><rect x="1443.73" y="174.7" width="21.8" height="9" rx="2.2"/><text x="1454.63" y="181.65">30.3%</text><rect x="650" y="224.64" width="21.8" height="9" rx="2.2"/><text x="660.9" y="231.59">27.6%</text><rect x="696.5" y="224.64" width="17" height="9" rx="2.2"/><text x="705" y="231.59">34%</text><rect x="738.19" y="224.64" width="21.8" height="9" rx="2.2"/><text x="749.09" y="231.59">38.5%</text><rect x="782.29" y="224.64" width="21.8" height="9" rx="2.2"/><text x="793.19" y="231.59">44.6%</text><rect x="826.38" y="224.64" width="21.8" height="9" rx="2.2"/><text x="837.28" y="231.59">39.5%</text><rect x="870.48" y="224.64" width="21.8" height="9" rx="2.2"/><text x="881.38" y="231.59">36.4%</text><rect x="914.58" y="224.64" width="21.8" height="9" rx="2.2"/><text x="925.48" y="231.59">44.3%</text><rect x="958.67" y="224.64" width="21.8" height="9" rx="2.2"/><text x="969.57" y="231.59">39.2%</text><rect x="1002.77" y="224.64" width="21.8" height="9" rx="2.2"/><text x="1013.67" y="231.59">37.3%</text><rect x="1046.86" y="224.64" width="21.8" height="9" rx="2.2"/><text x="1057.76" y="231.59">44.9%</text><rect x="1090.96" y="224.64" width="21.8" height="9" rx="2.2"/><text x="1101.86" y="231.59">39.4%</text><rect x="1135.06" y="224.64" width="21.8" height="9" rx="2.2"/><text x="1145.96" y="231.59">38.4%</text><rect x="1179.15" y="224.64" width="21.8" height="9" rx="2.2"/><text x="1190.05" y="231.59">44.1%</text><rect x="1223.25" y="224.64" width="21.8" height="9" rx="2.2"/><text x="1234.15" y="231.59">39.1%</text><rect x="1267.34" y="224.64" width="21.8" height="9" rx="2.2"/><text x="1278.24" y="231.59">37.9%</text><rect x="1311.44" y="224.64" width="21.8" height="9" rx="2.2"/><text x="1322.34" y="231.59">43.6%</text><rect x="1355.54" y="224.64" width="21.8" height="9" rx="2.2"/><text x="1366.44" y="231.59">44.2%</text><rect x="1399.63" y="224.64" width="21.8" height="9" rx="2.2"/><text x="1410.53" y="231.59">25.9%</text><rect x="1443.73" y="224.64" width="21.8" height="9" rx="2.2"/><text x="1454.63" y="231.59">30.3%</text><rect x="650" y="273.1" width="21.8" height="9" rx="2.2"/><text x="660.9" y="280.05">27.6%</text><rect x="696.5" y="273.1" width="17" height="9" rx="2.2"/><text x="705" y="280.05">34%</text><rect x="738.19" y="273.1" width="21.8" height="9" rx="2.2"/><text x="749.09" y="280.05">38.5%</text><rect x="782.29" y="273.1" width="21.8" height="9" rx="2.2"/><text x="793.19" y="280.05">44.6%</text><rect x="826.38" y="273.1" width="21.8" height="9" rx="2.2"/><text x="837.28" y="280.05">39.5%</text><rect x="870.48" y="273.1" width="21.8" height="9" rx="2.2"/><text x="881.38" y="280.05">36.4%</text><rect x="914.58" y="273.1" width="21.8" height="9" rx="2.2"/><text x="925.48" y="280.05">44.3%</text><rect x="958.67" y="273.1" width="21.8" height="9" rx="2.2"/><text x="969.57" y="280.05">39.2%</text><rect x="1002.77" y="273.1" width="21.8" height="9" rx="2.2"/><text x="1013.67" y="280.05">37.3%</text><rect x="1046.86" y="273.1" width="21.8" height="9" rx="2.2"/><text x="1057.76" y="280.05">44.9%</text><rect x="1090.96" y="273.1" width="21.8" height="9" rx="2.2"/><text x="1101.86" y="280.05">39.4%</text><rect x="1135.06" y="273.1" width="21.8" height="9" rx="2.2"/><text x="1145.96" y="280.05">38.4%</text><rect x="1179.15" y="273.1" width="21.8" height="9" rx="2.2"/><text x="1190.05" y="280.05">44.1%</text><rect x="1223.25" y="273.1" width="21.8" height="9" rx="2.2"/><text x="1234.15" y="280.05">39.1%</text><rect x="1267.34" y="273.1" width="21.8" height="9" rx="2.2"/><text x="1278.24" y="280.05">37.9%</text><rect x="1311.44" y="273.1" width="21.8" height="9" rx="2.2"/><text x="1322.34" y="280.05">43.6%</text><rect x="1355.54" y="273.1" width="21.8" height="9" rx="2.2"/><text x="1366.44" y="280.05">44.2%</text><rect x="1399.63" y="273.1" width="21.8" height="9" rx="2.2"/><text x="1410.53" y="280.05">25.9%</text><rect x="1443.73" y="273.1" width="21.8" height="9" rx="2.2"/><text x="1454.63" y="280.05">30.3%</text><rect x="650" y="323.03" width="21.8" height="9" rx="2.2"/><text x="660.9" y="329.98">27.6%</text><rect x="696.5" y="323.03" width="17" height="9" rx="2.2"/><text x="705" y="329.98">34%</text><rect x="738.19" y="323.03" width="21.8" height="9" rx="2.2"/><text x="749.09" y="329.98">38.5%</text><rect x="782.29" y="323.03" width="21.8" height="9" rx="2.2"/><text x="793.19" y="329.98">44.6%</text><rect x="826.38" y="323.03" width="21.8" height="9" rx="2.2"/><text x="837.28" y="329.98">39.5%</text><rect x="870.48" y="323.03" width="21.8" height="9" rx="2.2"/><text x="881.38" y="329.98">36.4%</text><rect x="914.58" y="323.03" width="21.8" height="9" rx="2.2"/><text x="925.48" y="329.98">44.3%</text><rect x="958.67" y="323.03" width="21.8" height="9" rx="2.2"/><text x="969.57" y="329.98">39.2%</text><rect x="1002.77" y="323.03" width="21.8" height="9" rx="2.2"/><text x="1013.67" y="329.98">37.3%</text><rect x="1046.86" y="323.03" width="21.8" height="9" rx="2.2"/><text x="1057.76" y="329.98">44.9%</text><rect x="1090.96" y="323.03" width="21.8" height="9" rx="2.2"/><text x="1101.86" y="329.98">39.4%</text><rect x="1135.06" y="323.03" width="21.8" height="9" rx="2.2"/><text x="1145.96" y="329.98">38.4%</text><rect x="1179.15" y="323.03" width="21.8" height="9" rx="2.2"/><text x="1190.05" y="329.98">44.1%</text><rect x="1223.25" y="323.03" width="21.8" height="9" rx="2.2"/><text x="1234.15" y="329.98">39.1%</text><rect x="1267.34" y="323.03" width="21.8" height="9" rx="2.2"/><text x="1278.24" y="329.98">37.9%</text><rect x="1311.44" y="323.03" width="21.8" height="9" rx="2.2"/><text x="1322.34" y="329.98">43.6%</text><rect x="1355.54" y="323.03" width="21.8" height="9" rx="2.2"/><text x="1366.44" y="329.98">44.2%</text><rect x="1399.63" y="323.03" width="21.8" height="9" rx="2.2"/><text x="1410.53" y="329.98">25.9%</text><rect x="1443.73" y="323.03" width="21.8" height="9" rx="2.2"/><text x="1454.63" y="329.98">30.3%</text><rect x="650" y="371.5" width="21.8" height="9" rx="2.2"/><text x="660.9" y="378.45">27.6%</text><rect x="696.5" y="371.5" width="17" height="9" rx="2.2"/><text x="705" y="378.45">34%</text><rect x="738.19" y="371.5" width="21.8" height="9" rx="2.2"/><text x="749.09" y="378.45">38.5%</text><rect x="782.29" y="371.5" width="21.8" height="9" rx="2.2"/><text x="793.19" y="378.45">44.6%</text><rect x="826.38" y="371.5" width="21.8" height="9" rx="2.2"/><text x="837.28" y="378.45">39.5%</text><rect x="870.48" y="371.5" width="21.8" height="9" rx="2.2"/><text x="881.38" y="378.45">36.4%</text><rect x="914.58" y="371.5" width="21.8" height="9" rx="2.2"/><text x="925.48" y="378.45">44.3%</text><rect x="958.67" y="371.5" width="21.8" height="9" rx="2.2"/><text x="969.57" y="378.45">39.2%</text><rect x="1002.77" y="371.5" width="21.8" height="9" rx="2.2"/><text x="1013.67" y="378.45">37.3%</text><rect x="1046.86" y="371.5" width="21.8" height="9" rx="2.2"/><text x="1057.76" y="378.45">44.9%</text><rect x="1090.96" y="371.5" width="21.8" height="9" rx="2.2"/><text x="1101.86" y="378.45">39.4%</text><rect x="1135.06" y="371.5" width="21.8" height="9" rx="2.2"/><text x="1145.96" y="378.45">38.4%</text><rect x="1179.15" y="371.5" width="21.8" height="9" rx="2.2"/><text x="1190.05" y="378.45">44.1%</text><rect x="1223.25" y="371.5" width="21.8" height="9" rx="2.2"/><text x="1234.15" y="378.45">39.1%</text><rect x="1267.34" y="371.5" width="21.8" height="9" rx="2.2"/><text x="1278.24" y="378.45">37.9%</text><rect x="1311.44" y="371.5" width="21.8" height="9" rx="2.2"/><text x="1322.34" y="378.45">43.6%</text><rect x="1355.54" y="371.5" width="21.8" height="9" rx="2.2"/><text x="1366.44" y="378.45">44.2%</text><rect x="1399.63" y="371.5" width="21.8" height="9" rx="2.2"/><text x="1410.53" y="378.45">25.9%</text><rect x="1443.73" y="371.5" width="21.8" height="9" rx="2.2"/><text x="1454.63" y="378.45">30.3%</text><rect x="650" y="421.42" width="21.8" height="9" rx="2.2"/><text x="660.9" y="428.37">27.6%</text><rect x="696.5" y="421.42" width="17" height="9" rx="2.2"/><text x="705" y="428.37">34%</text><rect x="738.19" y="421.42" width="21.8" height="9" rx="2.2"/><text x="749.09" y="428.37">38.5%</text><rect x="782.29" y="421.42" width="21.8" height="9" rx="2.2"/><text x="793.19" y="428.37">44.6%</text><rect x="826.38" y="421.42" width="21.8" height="9" rx="2.2"/><text x="837.28" y="428.37">39.5%</text><rect x="870.48" y="421.42" width="21.8" height="9" rx="2.2"/><text x="881.38" y="428.37">36.4%</text><rect x="914.58" y="421.42" width="21.8" height="9" rx="2.2"/><text x="925.48" y="428.37">44.3%</text><rect x="958.67" y="421.42" width="21.8" height="9" rx="2.2"/><text x="969.57" y="428.37">39.2%</text><rect x="1002.77" y="421.42" width="21.8" height="9" rx="2.2"/><text x="1013.67" y="428.37">37.3%</text><rect x="1046.86" y="421.42" width="21.8" height="9" rx="2.2"/><text x="1057.76" y="428.37">44.9%</text><rect x="1090.96" y="421.42" width="21.8" height="9" rx="2.2"/><text x="1101.86" y="428.37">39.4%</text><rect x="1135.06" y="421.42" width="21.8" height="9" rx="2.2"/><text x="1145.96" y="428.37">38.4%</text><rect x="1179.15" y="421.42" width="21.8" height="9" rx="2.2"/><text x="1190.05" y="428.37">44.1%</text><rect x="1223.25" y="421.42" width="21.8" height="9" rx="2.2"/><text x="1234.15" y="428.37">39.1%</text><rect x="1267.34" y="421.42" width="21.8" height="9" rx="2.2"/><text x="1278.24" y="428.37">37.9%</text><rect x="1311.44" y="421.42" width="21.8" height="9" rx="2.2"/><text x="1322.34" y="428.37">43.6%</text><rect x="1355.54" y="421.42" width="21.8" height="9" rx="2.2"/><text x="1366.44" y="428.37">44.2%</text><rect x="1399.63" y="421.42" width="21.8" height="9" rx="2.2"/><text x="1410.53" y="428.37">25.9%</text><rect x="1443.73" y="421.42" width="21.8" height="9" rx="2.2"/><text x="1454.63" y="428.37">30.3%</text><rect x="650" y="469.9" width="21.8" height="9" rx="2.2"/><text x="660.9" y="476.85">27.6%</text><rect x="696.5" y="469.9" width="17" height="9" rx="2.2"/><text x="705" y="476.85">34%</text><rect x="738.19" y="469.9" width="21.8" height="9" rx="2.2"/><text x="749.09" y="476.85">38.5%</text><rect x="782.29" y="469.9" width="21.8" height="9" rx="2.2"/><text x="793.19" y="476.85">44.6%</text><rect x="826.38" y="469.9" width="21.8" height="9" rx="2.2"/><text x="837.28" y="476.85">39.5%</text><rect x="870.48" y="469.9" width="21.8" height="9" rx="2.2"/><text x="881.38" y="476.85">36.4%</text><rect x="914.58" y="469.9" width="21.8" height="9" rx="2.2"/><text x="925.48" y="476.85">44.3%</text><rect x="958.67" y="469.9" width="21.8" height="9" rx="2.2"/><text x="969.57" y="476.85">39.2%</text><rect x="1002.77" y="469.9" width="21.8" height="9" rx="2.2"/><text x="1013.67" y="476.85">37.3%</text><rect x="1046.86" y="469.9" width="21.8" height="9" rx="2.2"/><text x="1057.76" y="476.85">44.9%</text><rect x="1090.96" y="469.9" width="21.8" height="9" rx="2.2"/><text x="1101.86" y="476.85">39.4%</text><rect x="1135.06" y="469.9" width="21.8" height="9" rx="2.2"/><text x="1145.96" y="476.85">38.4%</text><rect x="1179.15" y="469.9" width="21.8" height="9" rx="2.2"/><text x="1190.05" y="476.85">44.1%</text><rect x="1223.25" y="469.9" width="21.8" height="9" rx="2.2"/><text x="1234.15" y="476.85">39.1%</text><rect x="1267.34" y="469.9" width="21.8" height="9" rx="2.2"/><text x="1278.24" y="476.85">37.9%</text><rect x="1311.44" y="469.9" width="21.8" height="9" rx="2.2"/><text x="1322.34" y="476.85">43.6%</text><rect x="1355.54" y="469.9" width="21.8" height="9" rx="2.2"/><text x="1366.44" y="476.85">44.2%</text><rect x="1399.63" y="469.9" width="21.8" height="9" rx="2.2"/><text x="1410.53" y="476.85">25.9%</text><rect x="1443.73" y="469.9" width="21.8" height="9" rx="2.2"/><text x="1454.63" y="476.85">30.3%</text><rect x="650" y="519.81" width="21.8" height="9" rx="2.2"/><text x="660.9" y="526.76">27.6%</text><rect x="696.5" y="519.81" width="17" height="9" rx="2.2"/><text x="705" y="526.76">34%</text><rect x="738.19" y="519.81" width="21.8" height="9" rx="2.2"/><text x="749.09" y="526.76">38.5%</text><rect x="782.29" y="519.81" width="21.8" height="9" rx="2.2"/><text x="793.19" y="526.76">44.6%</text><rect x="826.38" y="519.81" width="21.8" height="9" rx="2.2"/><text x="837.28" y="526.76">39.5%</text><rect x="870.48" y="519.81" width="21.8" height="9" rx="2.2"/><text x="881.38" y="526.76">36.4%</text><rect x="914.58" y="519.81" width="21.8" height="9" rx="2.2"/><text x="925.48" y="526.76">44.3%</text><rect x="958.67" y="519.81" width="21.8" height="9" rx="2.2"/><text x="969.57" y="526.76">39.2%</text><rect x="1002.77" y="519.81" width="21.8" height="9" rx="2.2"/><text x="1013.67" y="526.76">37.3%</text><rect x="1046.86" y="519.81" width="21.8" height="9" rx="2.2"/><text x="1057.76" y="526.76">44.9%</text><rect x="1090.96" y="519.81" width="21.8" height="9" rx="2.2"/><text x="1101.86" y="526.76">39.4%</text><rect x="1135.06" y="519.81" width="21.8" height="9" rx="2.2"/><text x="1145.96" y="526.76">38.4%</text><rect x="1179.15" y="519.81" width="21.8" height="9" rx="2.2"/><text x="1190.05" y="526.76">44.1%</text><rect x="1223.25" y="519.81" width="21.8" height="9" rx="2.2"/><text x="1234.15" y="526.76">39.1%</text><rect x="1267.34" y="519.81" width="21.8" height="9" rx="2.2"/><text x="1278.24" y="526.76">37.9%</text><rect x="1311.44" y="519.81" width="21.8" height="9" rx="2.2"/><text x="1322.34" y="526.76">43.6%</text><rect x="1355.54" y="519.81" width="21.8" height="9" rx="2.2"/><text x="1366.44" y="526.76">44.2%</text><rect x="1399.63" y="519.81" width="21.8" height="9" rx="2.2"/><text x="1410.53" y="526.76">25.9%</text><rect x="1443.73" y="519.81" width="21.8" height="9" rx="2.2"/><text x="1454.63" y="526.76">30.3%</text><rect x="650" y="568.3" width="21.8" height="9" rx="2.2"/><text x="660.9" y="575.25">27.6%</text><rect x="696.5" y="568.3" width="17" height="9" rx="2.2"/><text x="705" y="575.25">34%</text><rect x="738.19" y="568.3" width="21.8" height="9" rx="2.2"/><text x="749.09" y="575.25">38.5%</text><rect x="782.29" y="568.3" width="21.8" height="9" rx="2.2"/><text x="793.19" y="575.25">44.6%</text><rect x="826.38" y="568.3" width="21.8" height="9" rx="2.2"/><text x="837.28" y="575.25">39.5%</text><rect x="870.48" y="568.3" width="21.8" height="9" rx="2.2"/><text x="881.38" y="575.25">36.4%</text><rect x="914.58" y="568.3" width="21.8" height="9" rx="2.2"/><text x="925.48" y="575.25">44.3%</text><rect x="958.67" y="568.3" width="21.8" height="9" rx="2.2"/><text x="969.57" y="575.25">39.2%</text><rect x="1002.77" y="568.3" width="21.8" height="9" rx="2.2"/><text x="1013.67" y="575.25">37.3%</text><rect x="1046.86" y="568.3" width="21.8" height="9" rx="2.2"/><text x="1057.76" y="575.25">44.9%</text><rect x="1090.96" y="568.3" width="21.8" height="9" rx="2.2"/><text x="1101.86" y="575.25">39.4%</text><rect x="1135.06" y="568.3" width="21.8" height="9" rx="2.2"/><text x="1145.96" y="575.25">38.4%</text><rect x="1179.15" y="568.3" width="21.8" height="9" rx="2.2"/><text x="1190.05" y="575.25">44.1%</text><rect x="1223.25" y="568.3" width="21.8" height="9" rx="2.2"/><text x="1234.15" y="575.25">39.1%</text><rect x="1267.34" y="568.3" width="21.8" height="9" rx="2.2"/><text x="1278.24" y="575.25">37.9%</text><rect x="1311.44" y="568.3" width="21.8" height="9" rx="2.2"/><text x="1322.34" y="575.25">43.6%</text><rect x="1355.54" y="568.3" width="21.8" height="9" rx="2.2"/><text x="1366.44" y="575.25">44.2%</text><rect x="1399.63" y="568.3" width="21.8" height="9" rx="2.2"/><text x="1410.53" y="575.25">25.9%</text><rect x="1443.73" y="568.3" width="21.8" height="9" rx="2.2"/><text x="1454.63" y="575.25">30.3%</text><rect x="650" y="618.2" width="21.8" height="9" rx="2.2"/><text x="660.9" y="625.15">27.6%</text><rect x="696.5" y="618.2" width="17" height="9" rx="2.2"/><text x="705" y="625.15">34%</text><rect x="738.19" y="618.2" width="21.8" height="9" rx="2.2"/><text x="749.09" y="625.15">38.5%</text><rect x="782.29" y="618.2" width="21.8" height="9" rx="2.2"/><text x="793.19" y="625.15">44.6%</text><rect x="826.38" y="618.2" width="21.8" height="9" rx="2.2"/><text x="837.28" y="625.15">39.5%</text><rect x="870.48" y="618.2" width="21.8" height="9" rx="2.2"/><text x="881.38" y="625.15">36.4%</text><rect x="914.58" y="618.2" width="21.8" height="9" rx="2.2"/><text x="925.48" y="625.15">44.3%</text><rect x="958.67" y="618.2" width="21.8" height="9" rx="2.2"/><text x="969.57" y="625.15">39.2%</text><rect x="1002.77" y="618.2" width="21.8" height="9" rx="2.2"/><text x="1013.67" y="625.15">37.3%</text><rect x="1046.86" y="618.2" width="21.8" height="9" rx="2.2"/><text x="1057.76" y="625.15">44.9%</text><rect x="1090.96" y="618.2" width="21.8" height="9" rx="2.2"/><text x="1101.86" y="625.15">39.4%</text><rect x="1135.06" y="618.2" width="21.8" height="9" rx="2.2"/><text x="1145.96" y="625.15">38.4%</text><rect x="1179.15" y="618.2" width="21.8" height="9" rx="2.2"/><text x="1190.05" y="625.15">44.1%</text><rect x="1223.25" y="618.2" width="21.8" height="9" rx="2.2"/><text x="1234.15" y="625.15">39.1%</text><rect x="1267.34" y="618.2" width="21.8" height="9" rx="2.2"/><text x="1278.24" y="625.15">37.9%</text><rect x="1311.44" y="618.2" width="21.8" height="9" rx="2.2"/><text x="1322.34" y="625.15">43.6%</text><rect x="1355.54" y="618.2" width="21.8" height="9" rx="2.2"/><text x="1366.44" y="625.15">44.2%</text><rect x="1399.63" y="618.2" width="21.8" height="9" rx="2.2"/><text x="1410.53" y="625.15">25.9%</text><rect x="1443.73" y="618.2" width="21.8" height="9" rx="2.2"/><text x="1454.63" y="625.15">30.3%</text><rect x="650" y="666.7" width="21.8" height="9" rx="2.2"/><text x="660.9" y="673.65">27.6%</text><rect x="696.5" y="666.7" width="17" height="9" rx="2.2"/><text x="705" y="673.65">34%</text><rect x="738.19" y="666.7" width="21.8" height="9" rx="2.2"/><text x="749.09" y="673.65">38.5%</text><rect x="782.29" y="666.7" width="21.8" height="9" rx="2.2"/><text x="793.19" y="673.65">44.6%</text><rect x="826.38" y="666.7" width="21.8" height="9" rx="2.2"/><text x="837.28" y="673.65">39.5%</text><rect x="870.48" y="666.7" width="21.8" height="9" rx="2.2"/><text x="881.38" y="673.65">36.4%</text><rect x="914.58" y="666.7" width="21.8" height="9" rx="2.2"/><text x="925.48" y="673.65">44.3%</text><rect x="958.67" y="666.7" width="21.8" height="9" rx="2.2"/><text x="969.57" y="673.65">39.2%</text><rect x="1002.77" y="666.7" width="21.8" height="9" rx="2.2"/><text x="1013.67" y="673.65">37.3%</text><rect x="1046.86" y="666.7" width="21.8" height="9" rx="2.2"/><text x="1057.76" y="673.65">44.9%</text><rect x="1090.96" y="666.7" width="21.8" height="9" rx="2.2"/><text x="1101.86" y="673.65">39.4%</text><rect x="1135.06" y="666.7" width="21.8" height="9" rx="2.2"/><text x="1145.96" y="673.65">38.4%</text><rect x="1179.15" y="666.7" width="21.8" height="9" rx="2.2"/><text x="1190.05" y="673.65">44.1%</text><rect x="1223.25" y="666.7" width="21.8" height="9" rx="2.2"/><text x="1234.15" y="673.65">39.1%</text><rect x="1267.34" y="666.7" width="21.8" height="9" rx="2.2"/><text x="1278.24" y="673.65">37.9%</text><rect x="1311.44" y="666.7" width="21.8" height="9" rx="2.2"/><text x="1322.34" y="673.65">43.6%</text><rect x="1355.54" y="666.7" width="21.8" height="9" rx="2.2"/><text x="1366.44" y="673.65">44.2%</text><rect x="1399.63" y="666.7" width="21.8" height="9" rx="2.2"/><text x="1410.53" y="673.65">25.9%</text><rect x="1443.73" y="666.7" width="21.8" height="9" rx="2.2"/><text x="1454.63" y="673.65">30.3%</text></g>
<rect x="661" y="96" width="16.5" height="16.5" rx="4.5" fill="#3d4f5c"/><path d="M666.9 100.9L669.7 98.2H671.6V107H669.6V101.2L666.9 102.7Z" fill="#fff"/>
<path d="M653.2 801.9H1683.5M653.2 795.5V808M1683.5 795.5V808M1710.4 87.5V775.3M1703.8 87.5H1716.9M1703.8 775.3H1716.9" stroke="#66777f" stroke-width="1.6" fill="none"/>
<rect x="1141" y="793.2" width="54.5" height="17.4" rx="5.5" fill="#3f505d"/><text x="1149" y="805.2" font-size="11.3" font-weight="bold" fill="#fff" textLength="39.3" lengthAdjust="spacingAndGlyphs">1800 cm</text>
<rect x="1693.2" y="422.7" width="54.3" height="17.3" rx="5.5" fill="#3f505d"/><text x="1701" y="435.0" font-size="11.3" font-weight="bold" fill="#fff" textLength="39.3" lengthAdjust="spacingAndGlyphs">1200 cm</text>
</svg>
<div id="gbar" class="abs"></div>
<div id="tb" class="abs">
<svg class="abs" style="left:0;top:0" width="716" height="34">
<circle cx="22.3" cy="15.6" r="5.2" stroke="#7a95a4" stroke-width="1.1" fill="none"/><path d="M26 19.3L30.3 23.3M19.6 15.6H25M22.3 12.9V18.3" stroke="#7a95a4" stroke-width="1.1"/>
<circle cx="54.5" cy="15.6" r="5.2" stroke="#7a95a4" stroke-width="1.1" fill="none"/><path d="M58.2 19.3L62.5 23.3M51.8 15.6H57.2" stroke="#7a95a4" stroke-width="1.1"/>
<path d="M82.6 10.9L86.9 15.2M93.7 10.9L89.4 15.2M82.6 22.1L86.9 17.8M93.7 22.1L89.4 17.8M82.6 13.8V10.9H85.5M90.8 10.9H93.7V13.8M93.7 19.2V22.1H90.8M85.5 22.1H82.6V19.2" stroke="#7a95a4" stroke-width="1.05" fill="none"/>
<path d="M112.5 3.8V29.8" stroke="#c9d4d9" stroke-width="1"/>
<rect x="124" y="6.8" width="80" height="19.8" rx="9.9" fill="#c6d8de"/>
<g transform="translate(134.5,11)"><path d="M6.9 0V2.1H0.3V6.8L3.4 8L6.3 8.5M6.9 9.5H10.1V11.4H6.9ZM5 0.4V2.1" stroke="#111" stroke-width="1.1" fill="none" stroke-linejoin="round"/></g>
<g transform="translate(219.3,11.1)"><path d="M4.2 0.45H0.45V10.55H4.2V9.3L2.7 8.9V7.8L4 7H6.1L7.1 8.2V8.9L5.7 9.3V10.55H8.8V0.45H5.7V1.1L7.1 1.9L6.1 4H4L2.6 1.9L4.2 1.1Z" stroke="#7a95a4" stroke-width="1.0" fill="none" stroke-linejoin="round"/></g>
<g transform="translate(291.5,11)"><path d="M0.4 2.6L1.8 1.4H3.6V0.4H6V1.4H7.7L9 2.6H6.7V10.4L6 11.2H3.4L2.7 10.4V2.6Z" stroke="#7a95a4" stroke-width="1.0" fill="none" stroke-linejoin="round"/></g>
<g transform="translate(362,11)"><path d="M0.4 7.2H5.7M6.3 7.2V10.9H10.2V7.4M6 5.2H10.2M10.2 7.4V0.6L11.6 1.3" stroke="#7a95a4" stroke-width="1.0" fill="none" stroke-linejoin="round"/><circle cx="0.9" cy="7.2" r="0.8" fill="#7a95a4"/></g>
<path d="M438.3 5.5V28.5" stroke="#c9d4d9" stroke-width="1"/>
<rect x="450" y="11.9" width="30" height="9.6" rx="4.8" fill="#c6d8de"/><circle cx="477.2" cy="17.2" r="8.5" fill="#7793a5"/>
<rect x="568.4" y="11.9" width="30" height="9.6" rx="4.8" fill="#c6d8de"/><circle cx="595" cy="17.2" r="8.5" fill="#7793a5"/>
</svg>
<div class="tbt" style="left:149.5px;color:#1e1e1e">Dachhaken</div>
<div class="tbt" style="left:234.4px">Schiene</div>
<div class="tbt" style="left:306.6px">Klemme</div>
<div class="tbt" style="left:379.9px">Verbinder</div>
<div class="tbt" style="left:489.5px;font-size:10.45px;color:#2a2a2a;top:12.5px">Farbe anzeigen</div>
<div class="tbt" style="left:608px;font-size:10.45px;color:#2a2a2a;top:12.5px">Auslastung anzeigen</div>
</div>
</body></html>
